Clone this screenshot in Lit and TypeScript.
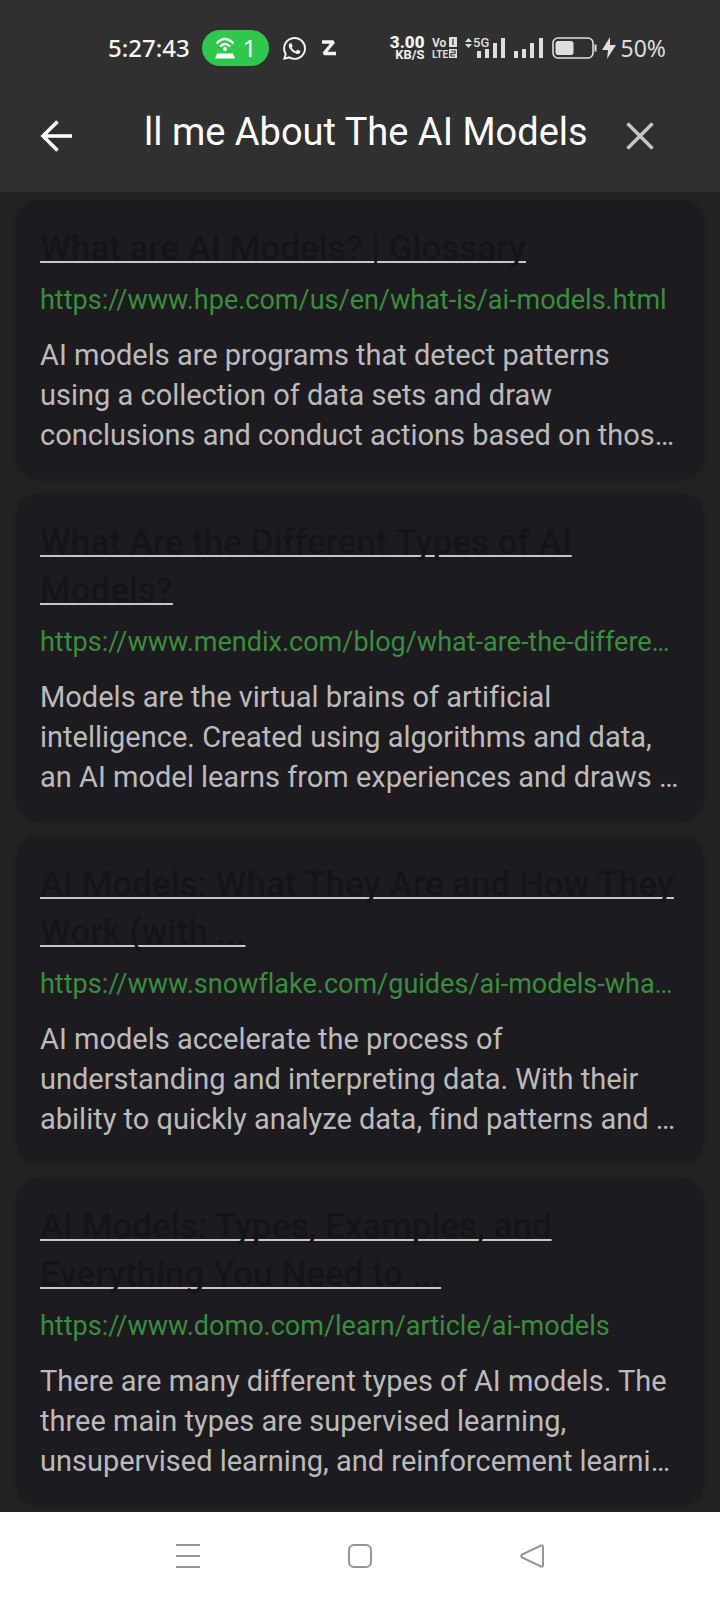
import { LitElement, html, css } from "lit";
import { customElement, property, state } from "lit/decorators.js";

interface Result {
  title: string;
  href: string;
  url: string;
  text: string;
}

const RESULTS: Result[] = [
  {
    title: "What are AI Models? | Glossary",
    href: "https://www.hpe.com/us/en/what-is/ai-models.html",
    url: "https://www.hpe.com/us/en/what-is/ai-models.html",
    text: "AI models are programs that detect patterns using a collection of data sets and draw conclusions and conduct actions based on thos…",
  },
  {
    title: "What Are the Different Types of AI Models?",
    href: "https://www.mendix.com/blog/",
    url: "https://www.mendix.com/blog/what-are-the-differe…",
    text: "Models are the virtual brains of artificial intelligence. Created using algorithms and data, an AI model learns from experiences and draws …",
  },
  {
    title: "AI Models: What They Are and How They Work (with ...",
    href: "https://www.snowflake.com/guides/",
    url: "https://www.snowflake.com/guides/ai-models-wha…",
    text: "AI models accelerate the process of understanding and interpreting data. With their ability to quickly analyze data, find patterns and …",
  },
  {
    title: "AI Models: Types, Examples, and Everything You Need to ...",
    href: "https://www.domo.com/learn/article/ai-models",
    url: "https://www.domo.com/learn/article/ai-models",
    text: "There are many different types of AI models. The three main types are supervised learning, unsupervised learning, and reinforcement learni…",
  },
];

@customElement("status-bar")
export class StatusBar extends LitElement {
  static styles = css`
    :host {
      display: flex;
      align-items: center;
      justify-content: space-between;
      height: 80px;
      padding: 16px 54px 0 108px;
      box-sizing: border-box;
      color: #f4f4f4;
      font-family: "Noto Sans", sans-serif;
      font-size: 24px;
      line-height: 32px;
    }
    .group {
      display: flex;
      align-items: center;
    }
    .time {
      font-weight: 500;
    }
    .pill {
      display: flex;
      align-items: center;
      gap: 8px;
      height: 36px;
      margin: 0 14px 0 12px;
      padding: 0 13px;
      border-radius: 18px;
      background: #2dc84d;
      color: #fff;
    }
    .app {
      margin-right: 16px;
    }
    svg {
      display: block;
      flex: none;
      overflow: visible;
    }
    .right {
      color: #dedede;
      font-size: 23px;
    }
    .rate {
      display: flex;
      flex-direction: column;
      align-items: flex-end;
      margin-right: 7px;
      color: #f0f0f0;
      font: 700 13px/12px Roboto, sans-serif;
    }
    .rate strong {
      font-size: 17px;
      line-height: 14px;
    }
    .volte {
      margin-right: 8px;
    }
    .signal {
      margin-right: 9px;
    }
    .battery,
    .bolt {
      margin-right: 5px;
    }
  `;

  render() {
    return html`
      <div class="group">
        <span class="time">5:27:43</span>
        <span class="pill">
          <svg width="20" height="22" viewBox="0 0 20 22" fill="none" stroke="#fff" stroke-width="2.4">
            <path d="M1.5 6.5Q10 -2.5 18.5 6.5M5 9.5Q10 4.5 15 9.5" />
            <circle cx="10" cy="12" r="2" fill="#fff" stroke="none" />
            <path d="M2 16.5h16l2 5H0z" fill="#fff" stroke="none" />
          </svg>
          <span>1</span>
        </span>
        <svg class="app" width="23" height="23" viewBox="0 0 24 24" fill="#f4f4f4" aria-label="WhatsApp">
          <path
            d="M17.472 14.382c-.297-.149-1.758-.867-2.03-.967-.273-.099-.471-.148-.67.15-.197.297-.767.966-.94 1.164-.173.199-.347.223-.644.075-.297-.15-1.255-.463-2.39-1.475-.883-.788-1.480-1.761-1.653-2.059-.173-.297-.018-.458.130-.606.134-.133.298-.347.446-.520.149-.174.198-.298.298-.497.099-.198.050-.371-.025-.520-.075-.149-.669-1.612-.916-2.207-.242-.579-.487-.5-.669-.510-.173-.008-.371-.010-.570-.010-.198 0-.520.074-.792.372-.272.297-1.040 1.016-1.040 2.479 0 1.462 1.065 2.875 1.213 3.074.149.198 2.096 3.200 5.077 4.487.709.306 1.262.489 1.694.625.712.227 1.360.195 1.871.118.571-.085 1.758-.719 2.006-1.413.248-.694.248-1.289.173-1.413-.074-.124-.272-.198-.570-.347m-5.421 7.403h-.004a9.870 9.870 0 0 1-5.031-1.378l-.361-.214-3.741.982.998-3.648-.235-.374a9.860 9.860 0 0 1-1.510-5.260c.001-5.450 4.436-9.884 9.888-9.884 2.640 0 5.122 1.030 6.988 2.898a9.825 9.825 0 0 1 2.893 6.994c-.003 5.450-4.437 9.884-9.885 9.884m8.413-18.297A11.815 11.815 0 0 0 12.050 0C5.495 0 .160 5.335.157 11.892c0 2.096.547 4.142 1.588 5.945L.057 24l6.305-1.654a11.882 11.882 0 0 0 5.683 1.448h.005c6.554 0 11.890-5.335 11.893-11.893a11.821 11.821 0 0 0-3.480-8.413z"
          />
        </svg>
        <svg width="14" height="18" viewBox="0 0 14 18" fill="none" stroke="#f4f4f4" stroke-width="3.4" stroke-linejoin="bevel">
          <path d="M0 3h11.500L2 14.500h12" />
        </svg>
      </div>
      <div class="group right">
        <span class="rate"><strong>3.00</strong><span>KB/S</span></span>
        <svg class="volte" width="25" height="22" viewBox="0 0 25 22" fill="#dedede" font-family="Liberation Sans Narrow, Roboto, sans-serif" font-weight="700">
          <text x="0" y="10" font-size="12">Vo</text>
          <text x="0" y="21" font-size="10">LTE</text>
          <rect x="17" y="0" width="8" height="10" />
          <rect x="17" y="12" width="8" height="9" />
          <path d="M21 2v6M19 14h4v2.500h-4v2.500h4" fill="none" stroke="#303030" stroke-width="1.2" />
        </svg>
        <svg class="signal" width="40" height="22" viewBox="0 0 40 22" fill="#dedede">
          <path d="M0 5l3.500-4L7 5zM0 7l3.500 4L7 7z" />
          <text x="8" y="10" font-size="13" font-family="Roboto, sans-serif" font-weight="500">5G</text>
          <path d="M12 14h4v7h-4zM20 12h4v9h-4zM28 6h4v15h-4zM36 1h4v20h-4z" />
        </svg>
        <svg class="signal" width="29" height="22" viewBox="0 0 29 22" fill="#dedede">
          <path d="M0 14h4v7H0zM8 12h4v9H8zM16 6h4v15h-4zM25 1h4v20h-4z" />
        </svg>
        <svg class="battery" width="45" height="22" viewBox="0 0 45 22" fill="none" stroke="#dedede">
          <rect x="1" y="1" width="40" height="20" rx="5" stroke-width="1.6" />
          <rect x="3.5" y="4" width="18" height="14" rx="2.5" fill="#dedede" stroke="none" />
          <path d="M43.500 7.500v7" stroke-width="2" />
        </svg>
        <svg class="bolt" width="14" height="22" viewBox="0 0 14 22" fill="#dedede">
          <path d="M8 0L0 13h6l-1 9 9-14H8z" />
        </svg>
        <span>50%</span>
      </div>
    `;
  }
}

@customElement("search-bar")
export class SearchBar extends LitElement {
  static styles = css`
    :host {
      display: flex;
      align-items: center;
      height: 112px;
      padding: 0 32px;
      box-sizing: border-box;
    }
    .icon {
      display: grid;
      place-items: center;
      width: 48px;
      height: 48px;
      padding: 0;
      border: 0;
      background: none;
      cursor: pointer;
    }
    .query {
      flex: 1;
      min-width: 0;
      margin: 0 24px 8px 64px;
      padding: 0;
      border: 0;
      outline: 0;
      background: none;
      color: #fff;
      font: 400 38px/48px Roboto, sans-serif;
    }
    .clear {
      margin-right: 24px;
    }
  `;

  @state() private query = "ll me About The AI Models";

  render() {
    return html`
      <button class="icon" aria-label="Back">
        <svg width="32" height="32" viewBox="0 0 32 32" fill="none" stroke="#fff" stroke-width="3.6">
          <path d="M17.500 1.500L3 16l14.500 14.500M3 16h29" />
        </svg>
      </button>
      <input
        class="query"
        type="text"
        aria-label="Search"
        .value=${this.query}
        @input=${(e: Event) => (this.query = (e.target as HTMLInputElement).value)}
      />
      <button class="icon clear" aria-label="Clear" @click=${() => (this.query = "")}>
        <svg width="28" height="28" viewBox="0 0 28 28" fill="none" stroke="#c6c6c6" stroke-width="3.4">
          <path d="M1.500 1.500l25 25M26.500 1.500l-25 25" />
        </svg>
      </button>
    `;
  }
}

@customElement("result-card")
export class ResultCard extends LitElement {
  static styles = css`
    :host {
      display: flex;
      flex-direction: column;
      padding: 25px 24px 24px;
      border-radius: 24px;
      background: #1e1b20;
      box-shadow: 0 1px 4px rgba(0, 0, 0, 0.2);
      font-variant-ligatures: none;
    }
    .title {
      margin: 0 0 8px;
      font-family: Roboto, sans-serif;
      font-size: 35px;
      font-weight: 500;
      line-height: 48px;
    }
    .title a {
      color: #161418;
      text-decoration: underline 2px #cac5cc;
      text-decoration-skip-ink: none;
      text-underline-offset: 1px;
    }
    .url {
      margin: 0 0 16px;
      color: #388e3c;
      font-family: Roboto, sans-serif;
      font-size: 27px;
      line-height: 38px;
      overflow-wrap: anywhere;
    }
    .text {
      margin: 0;
      color: #bbbabc;
      font-family: Roboto, sans-serif;
      font-size: 29px;
      line-height: 40px;
    }
  `;

  @property({ attribute: false }) result!: Result;

  render() {
    const { title, href, url, text } = this.result;
    return html`
      <h2 class="title"><a href=${href}>${title}</a></h2>
      <p class="url">${url}</p>
      <p class="text">${text}</p>
    `;
  }
}

@customElement("nav-bar")
export class NavBar extends LitElement {
  static styles = css`
    :host {
      display: flex;
      align-items: center;
      height: 88px;
      padding: 0 102px;
      background: #fff;
    }
    button {
      display: grid;
      flex: 1;
      place-items: center;
      height: 100%;
      padding: 0;
      border: 0;
      background: none;
    }
    svg {
      fill: none;
      stroke: #959595;
      stroke-width: 2;
    }
  `;

  render() {
    return html`
      <button aria-label="Recent apps">
        <svg width="26" height="26" viewBox="0 0 26 26"><path d="M1 2h24M1 13h24M1 24h24" /></svg>
      </button>
      <button aria-label="Home">
        <svg width="26" height="26" viewBox="0 0 26 26"><rect x="2" y="2" width="22" height="22" rx="5" /></svg>
      </button>
      <button aria-label="Go back">
        <svg width="26" height="26" viewBox="0 0 26 26">
          <path d="M22 2.500L3 11.500Q1.500 13 3 14.500L22 23.500Q24 24 24 22V4Q24 2 22 2.500z" />
        </svg>
      </button>
    `;
  }
}

@customElement("app-root")
export class AppRoot extends LitElement {
  static styles = css`
    :host {
      display: flex;
      flex-direction: column;
      min-height: 100vh;
      background: #222222;
    }
    .top {
      background: #303030;
    }
    .list {
      display: flex;
      flex: 1;
      flex-direction: column;
      gap: 15px;
      padding: 8px 16px 7px;
    }
  `;

  render() {
    return html`
      <header class="top">
        <status-bar></status-bar>
        <search-bar></search-bar>
      </header>
      <main class="list">
        ${RESULTS.map((r) => html`<result-card .result=${r}></result-card>`)}
      </main>
      <nav-bar></nav-bar>
    `;
  }
}
